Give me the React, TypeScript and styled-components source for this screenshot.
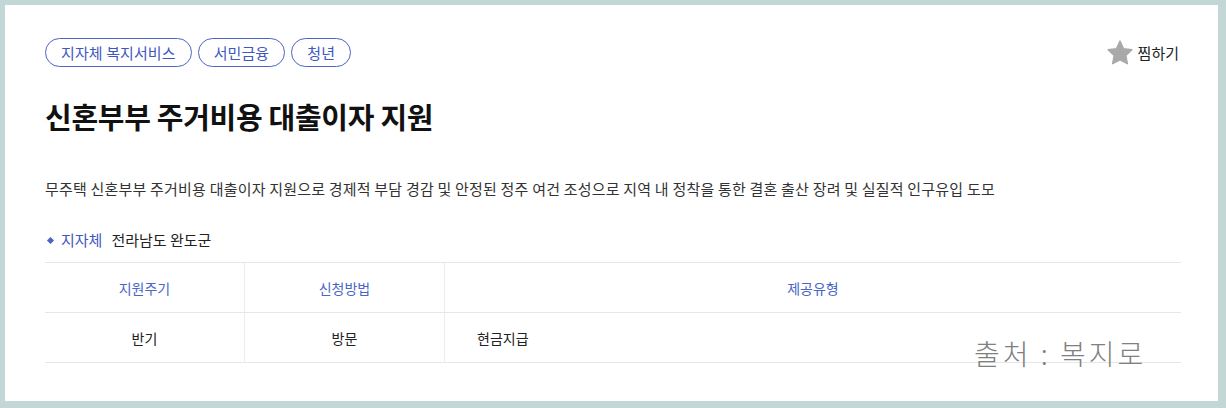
import styled, { createGlobalStyle } from "styled-components";

const GlobalStyle = createGlobalStyle`
  html, body {
    margin: 0;
    padding: 0;
    background: #c4d7d7;
  }
  body {
    font-family: "Noto Sans CJK KR", "Noto Sans", sans-serif;
    color: #222;
  }
`;

const Frame = styled.div`
  width: 1226px;
  height: 408px;
  box-sizing: border-box;
  padding: 5px 8px 7px 5px;
`;

const Card = styled.div`
  position: relative;
  height: 100%;
  background: #fff;
  box-sizing: border-box;
  padding: 33px 37px 0 40px;
`;

const TopRow = styled.div`
  display: flex;
  justify-content: space-between;
  align-items: center;
`;

const Tags = styled.div`
  display: flex;
  gap: 6px;
`;

const Tag = styled.span`
  display: inline-flex;
  align-items: center;
  height: 29px;
  box-sizing: border-box;
  padding: 0 15px;
  border: 1px solid #4c64c4;
  border-radius: 15px;
  color: #3f58be;
  font-size: 15px;
  letter-spacing: 0.1px;
`;

const Favorite = styled.button`
  display: flex;
  align-items: center;
  gap: 4px;
  border: 0;
  background: none;
  padding: 0;
  margin-right: 2px;
  font-family: inherit;
  font-size: 15px;
  color: #222;
  cursor: pointer;
`;

const Title = styled.h1`
  margin: 29px 0 0;
  font-size: 29px;
  font-weight: 700;
  line-height: 40px;
  color: #111;
  letter-spacing: -0.3px;
`;

const Description = styled.p`
  margin: 41px 0 0;
  font-size: 15px;
  line-height: 24px;
  letter-spacing: 0.2px;
  color: #333;
`;

const Region = styled.div`
  display: flex;
  align-items: center;
  margin-top: 27px;
  font-size: 15px;
  line-height: 24px;
`;

const Diamond = styled.span`
  width: 5px;
  height: 5px;
  margin: 0 8px 0 3px;
  background: #4c64c4;
  transform: rotate(45deg);
`;

const RegionLabel = styled.span`
  color: #3f58be;
  margin-right: 9px;
`;

const Table = styled.div`
  display: grid;
  grid-template-columns: 200px 200px 1fr;
  margin-top: 10px;
  border-top: 1px solid #e6e6e6;
`;

const Cell = styled.div<{ $head?: boolean; $left?: boolean; $last?: boolean }>`
  height: 49px;
  display: flex;
  align-items: center;
  justify-content: ${(p) => (p.$left ? "flex-start" : "center")};
  padding-left: ${(p) => (p.$left ? "32px" : "0")};
  border-bottom: 1px solid #e6e6e6;
  border-right: ${(p) => (p.$last ? "0" : "1px solid #ececec")};
  font-size: 14px;
  color: ${(p) => (p.$head ? "#4a66c8" : "#222")};
`;

const Watermark = styled.div`
  position: absolute;
  left: 969px;
  top: 328px;
  font-family: "Noto Sans CJK KR", sans-serif;
  font-weight: 300;
  font-size: 28px;
  letter-spacing: 3px;
  color: #808080;
`;

const StarIcon = () => (
  <svg width="28" height="28" viewBox="0 0 24 24" aria-hidden="true">
    <path
      d="M12 1.8l3.1 6.5 7.1.9-5.2 4.9 1.3 7.1L12 17.8l-6.3 3.4 1.3-7.1-5.2-4.9 7.1-.9z"
      fill="#a9a9a9"
      stroke="#a9a9a9"
      strokeWidth="1.2"
      strokeLinejoin="round"
    />
  </svg>
);

export default function App() {
  return (
    <>
      <GlobalStyle />
      <Frame>
        <Card>
          <TopRow>
            <Tags>
              <Tag>지자체 복지서비스</Tag>
              <Tag>서민금융</Tag>
              <Tag>청년</Tag>
            </Tags>
            <Favorite>
              <StarIcon />
              찜하기
            </Favorite>
          </TopRow>
          <Title>신혼부부 주거비용 대출이자 지원</Title>
          <Description>
            무주택 신혼부부 주거비용 대출이자 지원으로 경제적 부담 경감 및 안정된 정주 여건 조성으로 지역 내 정착을 통한 결혼 출산 장려 및 실질적 인구유입 도모
          </Description>
          <Region>
            <Diamond />
            <RegionLabel>지자체</RegionLabel>
            전라남도 완도군
          </Region>
          <Table>
            <Cell $head>지원주기</Cell>
            <Cell $head>신청방법</Cell>
            <Cell $head $last>제공유형</Cell>
            <Cell>반기</Cell>
            <Cell>방문</Cell>
            <Cell $left $last>현금지급</Cell>
          </Table>
          <Watermark>출처 : 복지로</Watermark>
        </Card>
      </Frame>
    </>
  );
}
